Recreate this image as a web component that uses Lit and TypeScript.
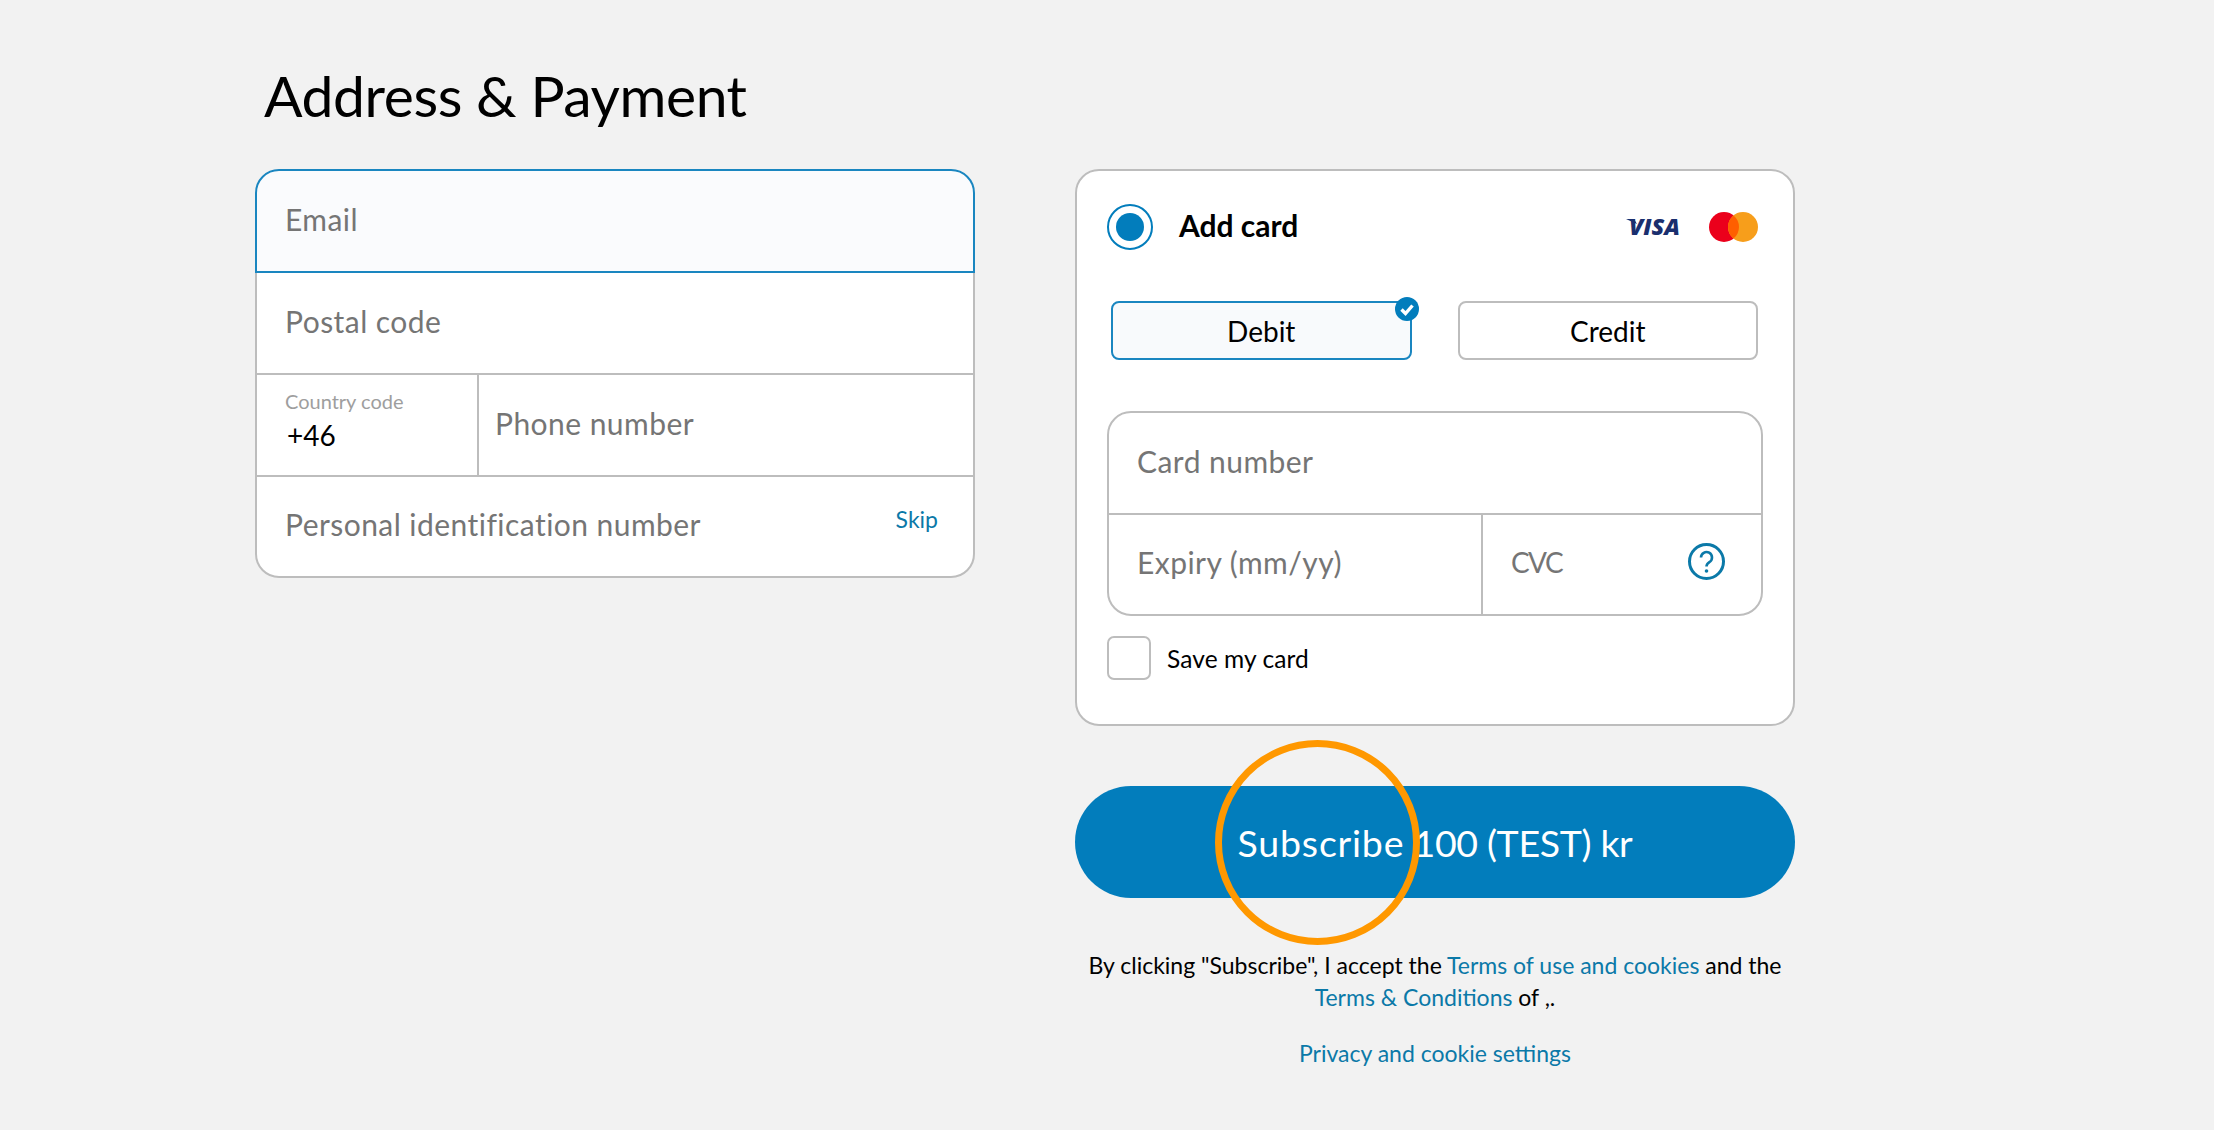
import { LitElement, html, css } from "lit";
import { customElement } from "lit/decorators.js";

@customElement("app-root")
export class AppRoot extends LitElement {
  static styles = css`
    :host {
      display: block;
      min-height: 100vh;
      background: #f2f2f2;
      font-family: "Lato", "Noto Sans", sans-serif;
      color: #000;
    }
    .page {
      padding: 58px 0 0 255px;
    }
    h1 {
      margin: 0 0 37px 9px;
      font-size: 57px;
      line-height: 74px;
      font-weight: 400;
      letter-spacing: -0.42px;
    }
    .columns {
      display: flex;
      align-items: flex-start;
      gap: 100px;
    }
    .left {
      width: 720px;
    }
    .right {
      width: 720px;
    }
    .field {
      box-sizing: border-box;
      height: 104px;
      margin-top: -2px;
      border: 2px solid #bdbdbd;
      background: #fff;
      display: flex;
      align-items: center;
      padding: 0 28px;
      position: relative;
    }
    .hint {
      font-size: 30px;
      color: #757575;
      letter-spacing: 0.45px;
      margin-bottom: 5px;
    }
    .hint.short {
      font-size: 28px;
      letter-spacing: -1.6px;
    }
    .field.focus {
      margin-top: 0;
      border-color: #1a86c0;
      background: #fafbfd;
      border-radius: 24px 24px 0 0;
      z-index: 1;
    }
    .field.last {
      height: 103px;
      border-radius: 0 0 24px 24px;
      justify-content: space-between;
    }
    .field.split {
      padding: 0;
    }
    .code {
      box-sizing: border-box;
      width: 222px;
      height: 100%;
      padding: 13px 0 0 28px;
      border-right: 2px solid #bdbdbd;
      display: flex;
      flex-direction: column;
    }
    .code small {
      font-size: 20px;
      line-height: 26px;
      color: #9e9e9e;
    }
    .code span {
      font-size: 28px;
      line-height: 36px;
      margin: 3px 0 0 2px;
    }
    .phone {
      padding-left: 16px;
    }
    .skip {
      align-self: flex-start;
      margin: 27px 7px 0 0;
      font-size: 23px;
      line-height: 30px;
      color: #0b79a8;
    }
    .card {
      box-sizing: border-box;
      background: #fff;
      border: 2px solid #bdbdbd;
      border-radius: 24px;
      padding: 33px 30px 43px 30px;
      height: 557px;
    }
    .head {
      display: flex;
      align-items: center;
      height: 46px;
      padding-right: 5px;
    }
    .radio {
      box-sizing: border-box;
      width: 46px;
      height: 46px;
      border: 2px solid #027dbc;
      border-radius: 50%;
      display: flex;
      align-items: center;
      justify-content: center;
      margin-right: 26px;
    }
    .radio i {
      width: 28px;
      height: 28px;
      border-radius: 50%;
      background: #027dbc;
    }
    .add {
      font-size: 30px;
      font-weight: 700;
      flex: 1;
      margin-bottom: 4px;
    }
    .visa {
      display: block;
      margin-right: 23px;
    }
    .mc {
      display: block;
    }
    .types {
      display: flex;
      gap: 46px;
      margin: 51px 5px 0 4px;
    }
    .type {
      box-sizing: border-box;
      flex: 1;
      height: 59px;
      border: 2px solid #bdbdbd;
      border-radius: 8px;
      display: flex;
      align-items: center;
      justify-content: center;
      font-size: 28px;
      position: relative;
    }
    .type.on {
      border-color: #1a86c0;
      background: #f8fafc;
    }
    .tick {
      position: absolute;
      top: -6px;
      right: -9px;
      display: block;
    }
    .group {
      margin-top: 51px;
    }
    .group .field {
      padding: 0 28px;
    }
    .group .top {
      margin-top: 0;
      border-radius: 24px 24px 0 0;
    }
    .group .bottom {
      height: 103px;
      padding: 0;
      border-radius: 0 0 24px 24px;
    }
    .expiry {
      box-sizing: border-box;
      width: 374px;
      height: 100%;
      padding-left: 28px;
      border-right: 2px solid #bdbdbd;
      display: flex;
      align-items: center;
    }
    .cvc {
      flex: 1;
      display: flex;
      align-items: center;
      justify-content: space-between;
      padding: 0 36px 0 28px;
    }
    .cvc svg {
      display: block;
      margin-top: -6px;
    }
    .save {
      display: flex;
      align-items: center;
      margin-top: 20px;
      font-size: 24.5px;
      letter-spacing: 0.1px;
    }
    .box {
      box-sizing: border-box;
      width: 44px;
      height: 44px;
      border: 2px solid #bdbdbd;
      border-radius: 7px;
      margin-right: 16px;
    }
    .pay {
      position: relative;
      margin-top: 60px;
      height: 112px;
      border-radius: 56px;
      background: #027dbc;
      color: #fff;
      font-size: 37.5px;
      letter-spacing: -0.35px;
      white-space: pre;
      display: flex;
      align-items: center;
      justify-content: center;
    }
    .pay .sub {
      letter-spacing: 0.8px;
    }
    .ring {
      position: absolute;
      left: 140px;
      top: -46px;
      width: 205px;
      height: 205px;
      box-sizing: border-box;
      border: 7px solid #ff9800;
      border-radius: 50%;
    }
    .terms {
      margin: 51px 0 0;
      text-align: center;
      font-size: 23px;
      line-height: 32px;
    }
    .privacy {
      margin: 24px 0 0;
      text-align: center;
      font-size: 23px;
      line-height: 32px;
    }
    a {
      color: #0b79a8;
      text-decoration: none;
    }
  `;

  render() {
    return html`
      <div class="page">
        <h1>Address &amp; Payment</h1>
        <div class="columns">
          <div class="left">
            <div class="field focus"><span class="hint">Email</span></div>
            <div class="field"><span class="hint">Postal code</span></div>
            <div class="field split">
              <div class="code">
                <small>Country code</small>
                <span>+46</span>
              </div>
              <span class="hint phone">Phone number</span>
            </div>
            <div class="field last">
              <span class="hint">Personal identification number</span>
              <a class="skip" href="#">Skip</a>
            </div>
          </div>
          <div class="right">
            <div class="card">
              <div class="head">
                <div class="radio"><i></i></div>
                <div class="add">Add card</div>
                <svg class="visa" width="60" height="32" viewBox="0 -7 60 32">
                  <path d="M0 1h8l3 5z" fill="#1a2f6e" />
                  <text
                    x="3"
                    y="17"
                    font-family="Open Sans"
                    font-size="23"
                    font-weight="800"
                    font-style="italic"
                    fill="#1a2f6e"
                    textLength="51"
                    lengthAdjust="spacingAndGlyphs"
                  >VISA</text>
                </svg>
                <svg class="mc" width="49" height="30" viewBox="0 0 49 30">
                  <circle cx="15" cy="15" r="15" fill="#eb001b" />
                  <circle cx="34" cy="15" r="15" fill="#f79e1b" />
                  <path d="M24.5 3.4a15 15 0 0 1 0 23.2a15 15 0 0 1 0-23.2z" fill="#ff5f00" />
                </svg>
              </div>
              <div class="types">
                <div class="type on">
                  Debit
                  <svg class="tick" width="24" height="24" viewBox="0 0 24 24">
                    <circle cx="12" cy="12" r="12" fill="#027dbc" />
                    <path d="M6.5 12.5l4 4 7-8" fill="none" stroke="#fff" stroke-width="3.4" />
                  </svg>
                </div>
                <div class="type">Credit</div>
              </div>
              <div class="group">
                <div class="field top"><span class="hint">Card number</span></div>
                <div class="field bottom">
                  <div class="expiry"><span class="hint">Expiry (mm/yy)</span></div>
                  <div class="cvc">
                    <span class="hint short">CVC</span>
                    <svg width="37" height="37" viewBox="0 0 37 37">
                      <circle cx="18.5" cy="18.5" r="17" fill="none" stroke="#0b79a8" stroke-width="3" />
                      <path
                        d="M13 14.5a5.5 5.5 0 1 1 8.4 4.7c-2 1.3-2.9 2.2-2.9 4.3"
                        fill="none"
                        stroke="#0b79a8"
                        stroke-width="2.6"
                      />
                      <circle cx="18.5" cy="28" r="1.8" fill="#0b79a8" />
                    </svg>
                  </div>
                </div>
              </div>
              <div class="save">
                <div class="box"></div>
                <span>Save my card</span>
              </div>
            </div>
            <div class="pay"><span class="sub">Subscribe</span><span> 100 (TEST) kr</span><div class="ring"></div></div>
            <p class="terms">
              By clicking "Subscribe", I accept the
              <a href="#">Terms of use and cookies</a> and the<br />
              <a href="#">Terms &amp; Conditions</a> of ,.
            </p>
            <p class="privacy"><a href="#">Privacy and cookie settings</a></p>
          </div>
        </div>
      </div>
    `;
  }
}
